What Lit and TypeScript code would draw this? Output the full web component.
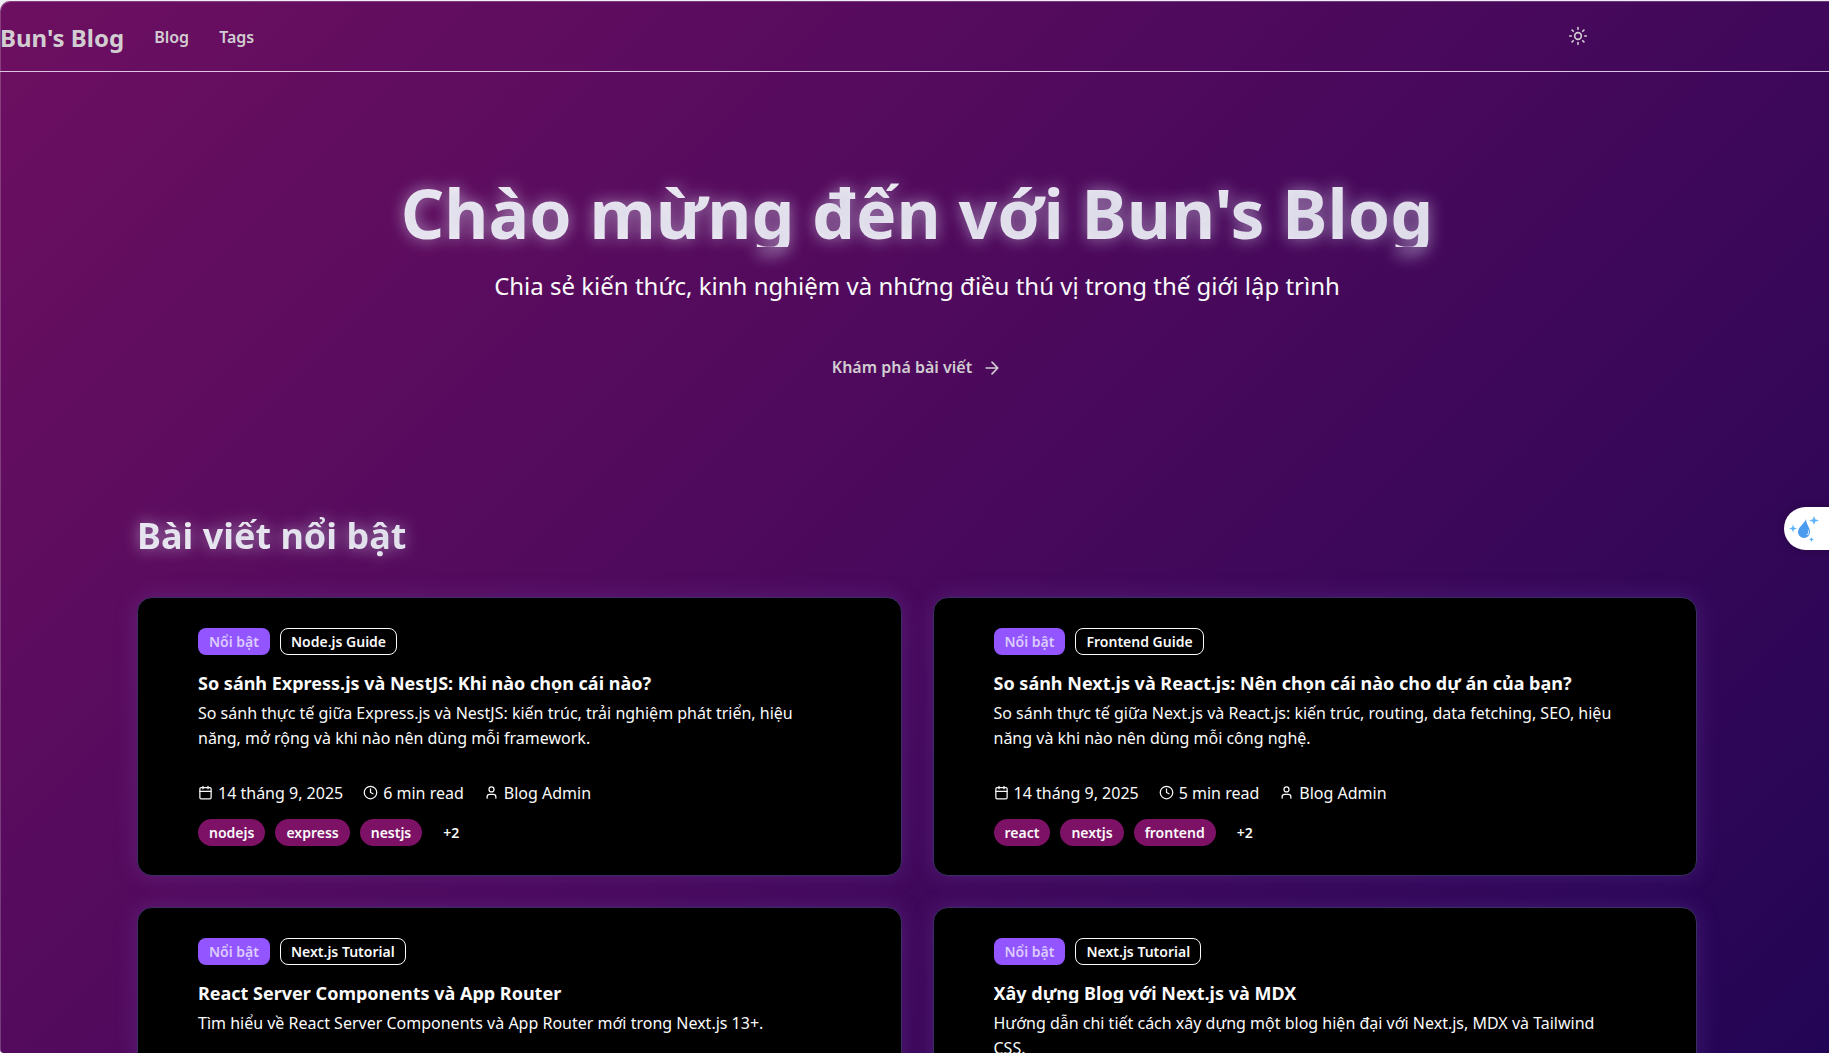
import { LitElement, html, css, svg } from "lit";
import { customElement, property } from "lit/decorators.js";

interface Post {
  category: string;
  title: string;
  summary: string;
  date: string;
  minutes: number;
  author: string;
  tags: string[];
  more: number;
}

const posts: Post[] = [
  {
    category: "Node.js Guide",
    title: "So sánh Express.js và NestJS: Khi nào chọn cái nào?",
    summary:
      "So sánh thực tế giữa Express.js và NestJS: kiến trúc, trải nghiệm phát triển, hiệu năng, mở rộng và khi nào nên dùng mỗi framework.",
    date: "14 tháng 9, 2025",
    minutes: 6,
    author: "Blog Admin",
    tags: ["nodejs", "express", "nestjs"],
    more: 2,
  },
  {
    category: "Frontend Guide",
    title: "So sánh Next.js và React.js: Nên chọn cái nào cho dự án của bạn?",
    summary:
      "So sánh thực tế giữa Next.js và React.js: kiến trúc, routing, data fetching, SEO, hiệu năng và khi nào nên dùng mỗi công nghệ.",
    date: "14 tháng 9, 2025",
    minutes: 5,
    author: "Blog Admin",
    tags: ["react", "nextjs", "frontend"],
    more: 2,
  },
  {
    category: "Next.js Tutorial",
    title: "React Server Components và App Router",
    summary: "Tìm hiểu về React Server Components và App Router mới trong Next.js 13+.",
    date: "14 tháng 9, 2025",
    minutes: 5,
    author: "Blog Admin",
    tags: ["react", "nextjs"],
    more: 2,
  },
  {
    category: "Next.js Tutorial",
    title: "Xây dựng Blog với Next.js và MDX",
    summary:
      "Hướng dẫn chi tiết cách xây dựng một blog hiện đại với Next.js, MDX và Tailwind CSS.",
    date: "14 tháng 9, 2025",
    minutes: 5,
    author: "Blog Admin",
    tags: ["nextjs", "mdx"],
    more: 2,
  },
];

const shapes = {
  sun: svg`<circle cx="12" cy="12" r="4"/><path d="M12 2v2M12 20v2M4.93 4.93l1.41 1.41M17.66 17.66l1.41 1.41M2 12h2M20 12h2M6.34 17.66l-1.41 1.41M19.07 4.93l-1.41 1.41"/>`,
  arrow: svg`<path d="M5 12h14M12 5l7 7-7 7"/>`,
  calendar: svg`<path d="M8 2v4M16 2v4M3 10h18"/><rect x="3" y="4" width="18" height="18" rx="2"/>`,
  clock: svg`<circle cx="12" cy="12" r="10"/><path d="M12 6v6l4 2"/>`,
  user: svg`<path d="M19 21v-2a4 4 0 0 0-4-4H9a4 4 0 0 0-4 4v2"/><circle cx="12" cy="7" r="4"/>`,
};

const icon = (name: keyof typeof shapes, size: number) => html`<svg
  width=${size}
  height=${size}
  viewBox="0 0 24 24"
  fill="none"
  stroke="currentColor"
  stroke-width="2"
  stroke-linecap="round"
  stroke-linejoin="round"
  aria-hidden="true"
>
  ${shapes[name]}
</svg>`;

const reset = css`
  * {
    box-sizing: border-box;
  }
  h1,
  h2,
  h3,
  p,
  ul {
    margin: 0;
    padding: 0;
  }
  ul {
    list-style: none;
  }
  a {
    color: inherit;
    text-decoration: none;
  }
  svg {
    display: block;
    flex: none;
  }
`;

@customElement("post-card")
export class PostCard extends LitElement {
  @property({ attribute: false }) post!: Post;

  static styles = [
    reset,
    css`
      :host {
        display: block;
      }
      .card {
        height: 100%;
        padding: 30px 60px 29px;
        border: 1px solid #3a2f63;
        border-radius: 15px;
        background: #000;
        color: #fafafa;
        box-shadow: 0 0 24px rgba(139, 112, 226, 0.2);
      }
      .row {
        display: flex;
        flex-wrap: wrap;
        gap: 10px;
      }
      .badge {
        display: block;
        height: 27px;
        padding: 0 10px;
        border: 1px solid transparent;
        border-radius: 8px;
        font-size: 14px;
        font-weight: 600;
        line-height: 26px;
      }
      .featured {
        background: #9255ff;
        color: #dccbff;
      }
      .category {
        border-color: #fafafa;
      }
      .tag {
        border-radius: 14px;
        background: #7d1165;
      }
      .title {
        margin-top: 18px;
        overflow: hidden;
        font-size: 18px;
        font-weight: 700;
        line-height: 20px;
      }
      .summary {
        min-height: 50px;
        margin-top: 8px;
        padding-right: 20px;
        font-size: 16px;
        line-height: 25px;
      }
      .meta {
        display: flex;
        gap: 20px;
        margin: 30px 0 13px;
        font-size: 16px;
        line-height: 25px;
      }
      .meta li {
        display: flex;
        gap: 5px;
      }
      .meta svg {
        margin-top: 4px;
      }
    `,
  ];

  render() {
    const p = this.post;
    return html`<article class="card">
      <div class="row">
        <span class="badge featured">Nổi bật</span>
        <span class="badge category">${p.category}</span>
      </div>
      <h3 class="title"><a href="#post">${p.title}</a></h3>
      <p class="summary">${p.summary}</p>
      <ul class="meta">
        <li>${icon("calendar", 15)}<span>${p.date}</span></li>
        <li>${icon("clock", 15)}<span>${p.minutes} min read</span></li>
        <li>${icon("user", 15)}<span>${p.author}</span></li>
      </ul>
      <div class="row">
        ${p.tags.map((t) => html`<a class="badge tag" href="#tag">${t}</a>`)}
        <span class="badge">+${p.more}</span>
      </div>
    </article>`;
  }
}

@customElement("app-root")
export class AppRoot extends LitElement {
  static styles = [
    reset,
    css`
      :host {
        display: block;
        box-sizing: border-box;
        height: 100vh;
        padding-top: 1px;
        background: #f1eef3;
        font-family: "Noto Sans", "Liberation Sans", sans-serif;
      }
      .shell {
        height: 100%;
        overflow-y: auto;
        scrollbar-width: none;
        border-radius: 10px 0 0 4px;
        background: linear-gradient(135deg, #6d0f61 0%, #4a095c 50%, #230555 100%);
        box-shadow: inset 1px 1px 0 rgba(255, 255, 255, 0.2);
        color: #fafafa;
      }
      .header {
        border-bottom: 1px solid #dcc6e2;
      }
      .bar {
        display: flex;
        align-items: center;
        justify-content: space-between;
        max-width: 1600px;
        height: 70px;
        color: #d1cdd1;
      }
      .nav {
        display: flex;
        align-items: center;
        gap: 30px;
        padding-top: 2px;
        font-size: 16px;
        font-weight: 600;
      }
      .logo {
        font-size: 24px;
        font-weight: 700;
      }
      .theme {
        display: grid;
        place-items: center;
        width: 45px;
        height: 45px;
        padding: 0;
        border: 0;
        background: none;
        color: inherit;
      }
      .main {
        padding-left: 5px;
      }
      .hero {
        display: flex;
        flex-direction: column;
        align-items: center;
        padding: 107px 20px 121px;
        text-align: center;
      }
      .glow {
        background: linear-gradient(90deg, #f0eff5, #e9e8f0);
        -webkit-background-clip: text;
        background-clip: text;
        color: transparent;
        text-shadow: 0 0 16px rgba(205, 200, 225, 0.65);
        font-weight: 700;
      }
      .headline {
        font-size: 68px;
        line-height: 68px;
      }
      .lead {
        margin-top: 21px;
        font-size: 24px;
        line-height: 35px;
      }
      .cta {
        display: flex;
        align-items: center;
        gap: 10px;
        margin-top: 40px;
        padding: 12px 20px;
        color: #d1cdd1;
        font-size: 16px;
        font-weight: 600;
        line-height: 25px;
      }
      .featured {
        max-width: 1600px;
        margin: 0 auto;
        padding: 0 20px 60px;
      }
      .section-title {
        width: fit-content;
        font-size: 36px;
        line-height: 45px;
      }
      .grid {
        display: grid;
        grid-template-columns: repeat(2, minmax(0, 1fr));
        gap: 31px;
        margin-top: 39px;
      }
      .assistant {
        position: absolute;
        right: 0;
        top: 507px;
        width: 45px;
        height: 43px;
        padding: 0;
        border: 0;
        border-radius: 22px 0 0 22px;
        background: #fff;
        box-shadow: 0 0 8px rgba(0, 0, 0, 0.25);
      }
    `,
  ];

  render() {
    return html`
      <div class="shell">
        <header class="header">
          <div class="bar">
            <nav class="nav">
              <a class="logo" href="#home">Bun's Blog</a>
              <a href="#blog">Blog</a>
              <a href="#tags">Tags</a>
            </nav>
            <button class="theme" type="button" aria-label="Theme">${icon("sun", 20)}</button>
          </div>
        </header>
        <main class="main">
          <section class="hero">
            <h1 class="glow headline">Chào mừng đến với Bun's Blog</h1>
            <p class="lead">
              Chia sẻ kiến thức, kinh nghiệm và những điều thú vị trong thế giới lập trình
            </p>
            <a class="cta" href="#blog">Khám phá bài viết ${icon("arrow", 20)}</a>
          </section>
          <section class="featured">
            <h2 class="glow section-title">Bài viết nổi bật</h2>
            <div class="grid">
              ${posts.map((p) => html`<post-card .post=${p}></post-card>`)}
            </div>
          </section>
        </main>
      </div>
      <button class="assistant" type="button" aria-label="Assistant">
        <svg width="45" height="43" viewBox="0 0 45 43" fill="#4b9bee" aria-hidden="true">
          <path d="M22 12c-1 4-8 8-8 13a6 6 0 0 0 12 0C26 20.500 22 17 22 12z" />
          <path d="M23.500 22c1.500 2 1 5-1.500 6 2 .4 3-1 3-3 0-1.200-.6-2.300-1.500-3z" fill="#fff" />
          <g fill="#5db4fa">
            <path d="M30 9l1.200 3.300 3.800 1.200-3.800 1.200L30 18l-1.200-3.300-3.800-1.200 3.800-1.200z" />
            <path d="M9 17.500l1 3 3 1-3 1-1 3-1-3-3-1 3-1z" />
            <path d="M27.500 30l.7 1.800 1.800.7-1.800.7-.7 1.800-.7-1.800-1.800-.7 1.800-.7z" />
          </g>
        </svg>
      </button>
    `;
  }
}
